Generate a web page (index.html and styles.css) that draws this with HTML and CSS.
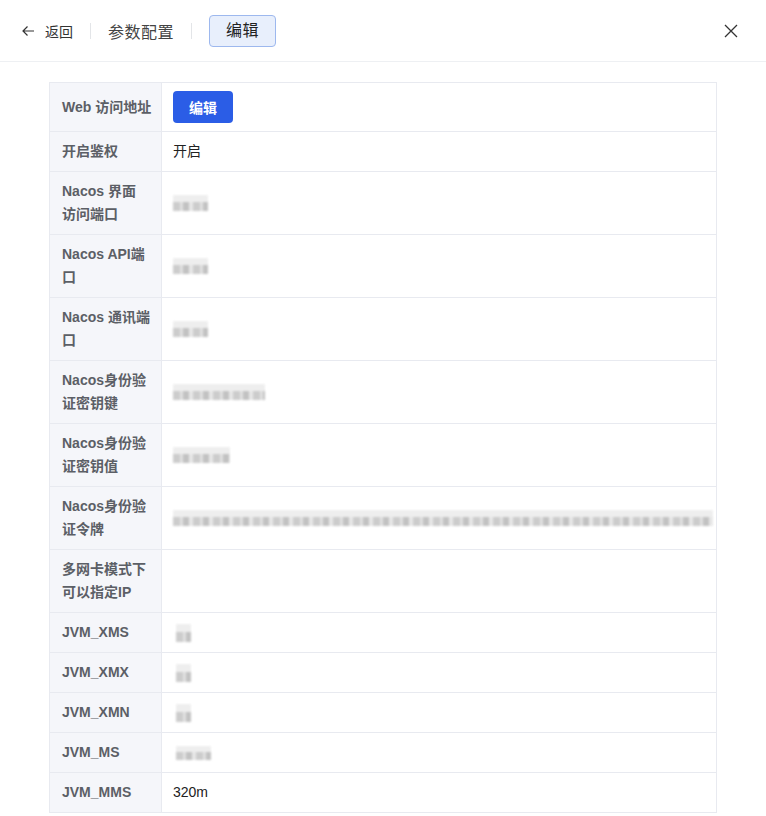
FILE: index.html
```html
<!DOCTYPE html>
<html lang="zh">
<head>
<meta charset="utf-8">
<link rel="stylesheet" href="styles.css">
</head>
<body>
<div class="header">
  <div class="crumbs">
    <span class="back">
      <svg width="14" height="14" viewBox="0 0 14 14"><path d="M13 7H2M6.5 2.5L2 7l4.5 4.5" fill="none" stroke="#333" stroke-width="1.2"/></svg>
      <span>返回</span>
    </span>
    <span class="sep"></span>
    <span class="crumb">参数配置</span>
    <span class="sep"></span>
    <span class="current">编辑</span>
  </div>
  <svg class="close" width="14" height="14" viewBox="0 0 14 14"><path d="M1 1L13 13M13 1L1 13" stroke="#333" stroke-width="1.3"/></svg>
</div>
<div class="content">
  <div class="table">
    <div class="row"><div class="label">Web 访问地址</div><div class="value"><button class="btn">编辑</button></div></div>
    <div class="row"><div class="label">开启鉴权</div><div class="value">开启</div></div>
    <div class="row"><div class="label">Nacos 界面<br>访问端口</div><div class="value"><span class="mask" style="width:35px"></span></div></div>
    <div class="row"><div class="label">Nacos API端<br>口</div><div class="value"><span class="mask" style="width:35px"></span></div></div>
    <div class="row"><div class="label">Nacos 通讯端<br>口</div><div class="value"><span class="mask" style="width:35px"></span></div></div>
    <div class="row"><div class="label">Nacos身份验<br>证密钥键</div><div class="value"><span class="mask" style="width:92px"></span></div></div>
    <div class="row"><div class="label">Nacos身份验<br>证密钥值</div><div class="value"><span class="mask" style="width:57px"></span></div></div>
    <div class="row"><div class="label">Nacos身份验<br>证令牌</div><div class="value"><span class="mask" style="width:540px"></span></div></div>
    <div class="row"><div class="label">多网卡模式下<br>可以指定IP</div><div class="value"></div></div>
    <div class="row"><div class="label">JVM_XMS</div><div class="value"><span class="mask small"></span></div></div>
    <div class="row"><div class="label">JVM_XMX</div><div class="value"><span class="mask small"></span></div></div>
    <div class="row"><div class="label">JVM_XMN</div><div class="value"><span class="mask small"></span></div></div>
    <div class="row"><div class="label">JVM_MS</div><div class="value"><span class="mask ms"></span></div></div>
    <div class="row"><div class="label">JVM_MMS</div><div class="value">320m</div></div>
  </div>
</div>
</body>
</html>
```
FILE: styles.css
```css
* { box-sizing: border-box; }
html, body { margin: 0; padding: 0; background: #fff; }
body {
  font-family: "Liberation Sans", "Noto Sans CJK SC", sans-serif;
  font-size: 14px;
  color: #333;
}
.header {
  height: 62px;
  border-bottom: 1px solid #eef0f3;
  display: flex;
  align-items: center;
  justify-content: space-between;
  padding: 0 28px 0 21px;
}
.crumbs { display: flex; align-items: center; }
.back { display: flex; align-items: center; gap: 10px; font-size: 14px; color: #333; }
.back svg { display: block; }
.sep { width: 1px; height: 16px; background: #e3e5e8; margin: 0 17px 0 17px; }
.crumb { font-size: 16px; color: #444; letter-spacing: 0.5px; }
.current {
  font-size: 16px;
  color: #222;
  background: #e8effc;
  border: 1px solid #9db8ee;
  border-radius: 4px;
  height: 32px;
  line-height: 30px;
  padding: 0 16px;
  letter-spacing: 0.5px;
}
.close { display: block; }
.content { padding: 20px 49px 0 49px; }
.table {
  border: 1px solid #e8eaf0;
  border-bottom: none;
}
.row {
  display: flex;
  border-bottom: 1px solid #e8eaf0;
}
.label {
  width: 112px;
  flex: none;
  display: flex;
  align-items: center;
  background: #f5f6fa;
  border-right: 1px solid #e8eaf0;
  padding: 8px 4px 8px 12px;
  line-height: 23px;
  font-weight: bold;
  color: #5c5f66;
  white-space: nowrap;
}
.value {
  flex: 1;
  padding: 8px 11px;
  line-height: 23px;
  display: flex;
  align-items: center;
  color: #222;
}
.btn {
  height: 32px;
  width: 60px;
  border: none;
  border-radius: 4px;
  background: #2b5de6;
  color: #fff;
  font-family: inherit;
  font-size: 14px;
  font-weight: bold;
  padding: 0;
}
.mask {
  display: inline-block;
  height: 16px;
  background:
    linear-gradient(#ececec 0 45%, transparent 45%),
    repeating-linear-gradient(90deg, #c4c4c4 0 7px, #dcdcdc 7px 10px, #b8b8b8 10px 16px, #e4e4e4 16px 20px);
  filter: blur(0.8px);
  opacity: 0.85;
}
.mask.small { width: 15px; height: 18px; margin-left: 3px; }
.mask.ms { width: 35px; height: 14px; margin-left: 3px; }
```
